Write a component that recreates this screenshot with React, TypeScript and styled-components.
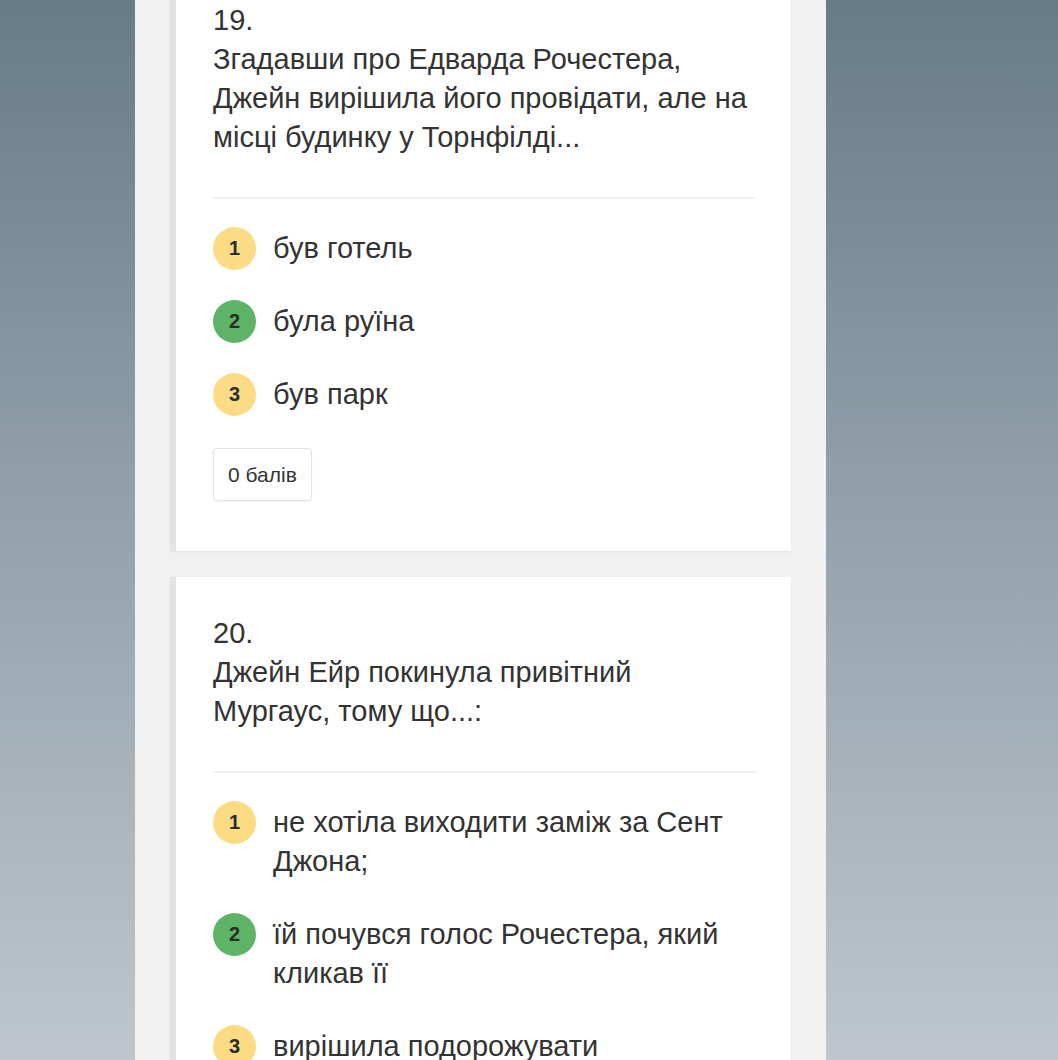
import React from "react";
import styled, { createGlobalStyle } from "styled-components";

const Global = createGlobalStyle`
  html, body { margin: 0; padding: 0; }
  body {
    min-height: 1060px;
    background: linear-gradient(180deg, #687b89 0%, #8f9ea9 40%, #c7cdd3 100%);
    font-family: "Liberation Sans", Arial, Helvetica, sans-serif;
    overflow: hidden;
  }
`;

const Column = styled.div`
  width: 691px;
  margin: -36px 0 0 135px;
  min-height: 1200px;
  background: #f1f1f1;
  padding: 0 35px;
  box-sizing: border-box;
  display: flex;
  flex-direction: column;
  gap: 26px;
`;

const Card = styled.div`
  background: #fff;
  border-left: 6px solid #e3e3e3;
  box-shadow: 0 1px 2px rgba(0, 0, 0, 0.06);
  padding: 37px 35px 50px 37px;
`;

const Question = styled.div`
  font-size: 29px;
  line-height: 39px;
  color: #333;
`;

const Divider = styled.hr`
  border: 0;
  border-top: 2px solid #f0f0f0;
  margin: 40px 0 30px;
`;

const Options = styled.div`
  display: flex;
  flex-direction: column;
  gap: 34px;
`;

const Option = styled.div`
  display: flex;
  align-items: flex-start;
  gap: 17px;
`;

const Badge = styled.div<{ $correct?: boolean }>`
  flex: none;
  width: 43px;
  height: 43px;
  margin: -2px 0;
  border-radius: 50%;
  background: ${(p) => (p.$correct ? "#5db466" : "#fcdb85")};
  color: #2b2b2b;
  font-weight: bold;
  font-size: 20px;
  display: flex;
  align-items: center;
  justify-content: center;
`;

const OptionText = styled.div`
  font-size: 29px;
  line-height: 39px;
  color: #333;
`;

const Score = styled.div`
  align-self: flex-start;
  margin-top: 34px;
  height: 53px;
  box-sizing: border-box;
  padding: 0 14px;
  border: 1px solid #e2e2e2;
  border-radius: 4px;
  box-shadow: 0 1px 2px rgba(0, 0, 0, 0.05);
  font-size: 21px;
  color: #333;
  display: flex;
  align-items: center;
`;

const Body = styled.div`
  display: flex;
  flex-direction: column;
`;

type Q = {
  n: number;
  text: string;
  options: { t: string; correct?: boolean }[];
  score?: string;
};

const questions: Q[] = [
  {
    n: 19,
    text: "Згадавши про Едварда Рочестера, Джейн вирішила його провідати, але на місці будинку у Торнфілді...",
    options: [{ t: "був готель" }, { t: "була руїна", correct: true }, { t: "був парк" }],
    score: "0 балів",
  },
  {
    n: 20,
    text: "Джейн Ейр покинула привітний Мургаус, тому що...:",
    options: [
      { t: "не хотіла виходити заміж за Сент Джона;" },
      { t: "їй почувся голос Рочестера, який кликав її", correct: true },
      { t: "вирішила подорожувати" },
    ],
  },
];

export default function App() {
  return (
    <>
      <Global />
      <Column>
        {questions.map((q) => (
          <Card key={q.n}>
            <Body>
              <Question>
                {q.n}.
                <br />
                {q.text}
              </Question>
              <Divider />
              <Options>
                {q.options.map((o, i) => (
                  <Option key={i}>
                    <Badge $correct={o.correct}>{i + 1}</Badge>
                    <OptionText>{o.t}</OptionText>
                  </Option>
                ))}
              </Options>
              {q.score && <Score>{q.score}</Score>}
            </Body>
          </Card>
        ))}
      </Column>
    </>
  );
}
